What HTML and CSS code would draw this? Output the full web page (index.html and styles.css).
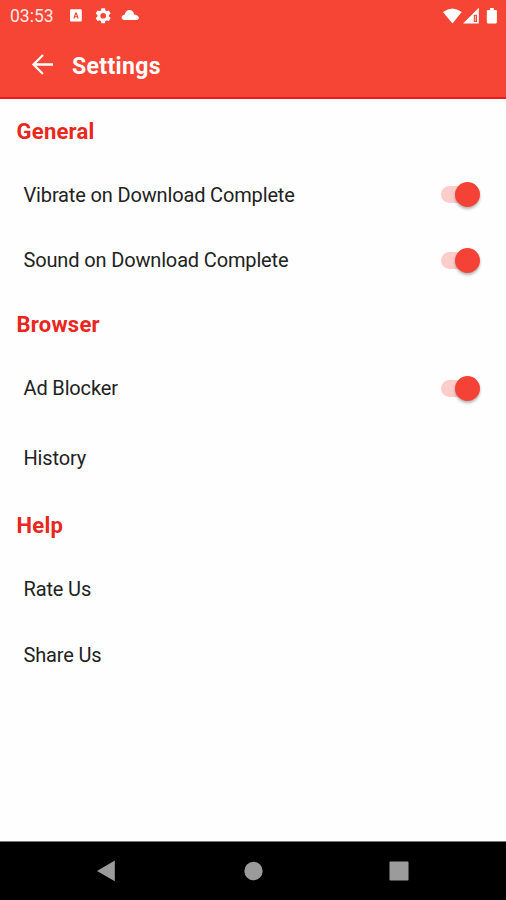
FILE: index.html
```html
<!DOCTYPE html>
<html lang="en">
<head>
<meta charset="utf-8">
<title>Settings</title>
<link rel="stylesheet" href="styles.css">
</head>
<body>
<header class="header">
  <div class="status">
    <span class="clock">03:53</span>
    <svg class="status-left" width="70" height="16" viewBox="0 0 70 16" fill="#fff">
      <path fill-rule="evenodd" d="M1 1.300h9.800a1 1 0 0 1 1 1v10.200a1 1 0 0 1-1 1H1a1 1 0 0 1-1-1V2.300a1 1 0 0 1 1-1zM5.300 4.400L3.300 10.600h1.300l.4-1.300h2l.4 1.300h1.300L6.700 4.400zM6 6l.7 2.200H5.300z"/>
      <g transform="translate(23.700 -1.700) scale(.79)"><path d="M19.140 12.940c.04-.3.060-.61.060-.94s-.02-.64-.07-.94l2.030-1.580c.18-.14.230-.41.120-.61l-1.920-3.320c-.12-.22-.37-.29-.59-.22l-2.390.96c-.5-.38-1.030-.7-1.620-.94l-.36-2.540c-.04-.24-.24-.41-.48-.41h-3.840c-.24 0-.43.170-.47.410l-.36 2.540c-.59.240-1.130.570-1.620.940l-2.390-.96c-.22-.08-.47 0-.59.220L2.740 8.870c-.12.210-.08.470.120.610l2.030 1.580c-.05.3-.09.630-.09.940s.02.640.07.940l-2.030 1.580c-.18.140-.23.410-.12.610l1.920 3.320c.12.220.370.290.590.220l2.390-.96c.5.380 1.030.7 1.620.94l.36 2.540c.05.240.240.410.480.410h3.840c.24 0 .44-.17.470-.41l.36-2.540c.59-.24 1.130-.56 1.620-.94l2.390.96c.22.080.470 0 .59-.22l1.920-3.320c.12-.22.070-.47-.12-.61zM12 15.600a3.600 3.600 0 1 1 0-7.200 3.600 3.600 0 0 1 0 7.200z"/></g>
      <path d="M54.300 12C52.800 12 51.600 11 51.600 9.500S52.700 7 54.500 6.700C55.300 3.700 57.200 2 59.300 2c2.500 0 4.400 1.800 5 4.400 2.800.3 4.600 1.600 4.600 3.400 0 1.300-1 2.200-2.500 2.200z"/>
    </svg>
    <svg class="status-right" width="56" height="18" viewBox="0 0 56 18" fill="#fff">
      <path d="M0 5Q9.300-2 18.800 5L9.400 16.500z"/>
      <path fill-rule="evenodd" d="M20 16.500L35.800 .8v15.700zM30.800 7.700v7.300h3.200V7.700z"/>
      <path d="M31.900 8.800h1.100v5.400h-1.100z" opacity=".6"/>
      <path d="M44.700 3h2.300V1h3.800v2H53a.9.900 0 0 1 .9.900v11.400a1.300 1.300 0 0 1-1.300 1.300h-7.500a1.300 1.300 0 0 1-1.300-1.300V3.900A.9.900 0 0 1 44.700 3z"/>
    </svg>
  </div>
  <div class="toolbar">
    <svg class="back" width="22" height="22" viewBox="0 0 22 22" fill="none" stroke="#fff" stroke-width="2.300"><path d="M22 10.500H2.500M12 1L2.500 10.500l9.500 9.500"/></svg>
    <h1 class="title">Settings</h1>
  </div>
</header>
<main class="content">
  <section class="general">
    <h2>General</h2>
    <div class="row"><span>Vibrate on Download Complete</span><i class="switch"></i></div>
    <div class="row"><span>Sound on Download Complete</span><i class="switch"></i></div>
  </section>
  <section class="browser">
    <h2>Browser</h2>
    <div class="row"><span>Ad Blocker</span><i class="switch"></i></div>
    <div class="row history"><span>History</span></div>
  </section>
  <section class="help">
    <h2>Help</h2>
    <div class="row"><span>Rate Us</span></div>
    <div class="row"><span>Share Us</span></div>
  </section>
</main>
<nav class="nav">
  <svg width="20" height="22" viewBox="0 0 20 22" fill="#9b9b9b"><path d="M17.800.5v20.800L0 10.900z"/></svg>
  <svg width="20" height="20" viewBox="0 0 20 20" fill="#9b9b9b"><circle cx="9.500" cy="10" r="9.200"/></svg>
  <svg width="20" height="20" viewBox="0 0 20 20" fill="#9b9b9b"><rect x=".5" y=".5" width="19" height="19" rx="1"/></svg>
</nav>
</body>
</html>
```
FILE: styles.css
```css
* { box-sizing: border-box; }
body {
  margin: 0;
  height: 900px;
  display: flex;
  flex-direction: column;
  background: #fefefe;
  font-family: Roboto, "Liberation Sans", sans-serif;
  color: #222;
  overflow: hidden;
}
svg { display: block; flex: none; }
.header {
  height: 99px;
  background: #f64435;
  border-bottom: 2px solid #e81c1c;
  color: #fff;
}
.status { height: 32px; display: flex; align-items: center; padding: 0 8px 0 10px; }
.clock { width: 60px; font-size: 17.500px; color: #ffe9e6; }
.status-right { margin-left: auto; margin-right: -1px; }
.toolbar { height: 66px; display: flex; align-items: center; padding-left: 31px; }
.title {
  margin: 0;
  padding: 3px 0 0 19px;
  font-size: 23px;
  font-weight: 700;
  line-height: 30px;
  letter-spacing: .35px;
}
h2 {
  margin: 0;
  height: 64px;
  line-height: 65px;
  padding-left: 16.500px;
  font-size: 22px;
  font-weight: 700;
  letter-spacing: .25px;
  color: #e92720;
}
.row {
  height: 65px;
  display: flex;
  align-items: center;
  justify-content: space-between;
  padding: 0 26px 0 23.500px;
  font-size: 20px;
  letter-spacing: -.15px;
}
.general .row { height: 65px; }
.general .row span,
.browser .row span { padding-bottom: 1px; }
.general .row:nth-child(2) { padding-bottom: 1px; }
.browser h2 { height: 64px; line-height: 64px; }
.browser .row { height: 63px; }
.browser .history { height: 77px; }
.help h2 { height: 59px; line-height: 58px; }
.help .row:last-child { height: 67px; }
.switch {
  position: relative;
  width: 39px;
  height: 26px;
}
.switch::before {
  content: "";
  position: absolute;
  left: 0;
  top: 4px;
  width: 34px;
  height: 17px;
  border-radius: 9px;
  background: #fdcdcb;
}
.switch::after {
  content: "";
  position: absolute;
  right: 0;
  top: 0;
  width: 25px;
  height: 25px;
  border-radius: 50%;
  background: #f44336;
  box-shadow: 0 2px 3px rgba(0, 0, 0, .3);
}
.nav {
  margin-top: auto;
  height: 59px;
  background: #000;
  border-top: 1px solid #777;
  display: flex;
  align-items: center;
  justify-content: space-between;
  padding: 0 97px;
}
.nav svg:nth-child(2) { margin-left: 1px; }
```
